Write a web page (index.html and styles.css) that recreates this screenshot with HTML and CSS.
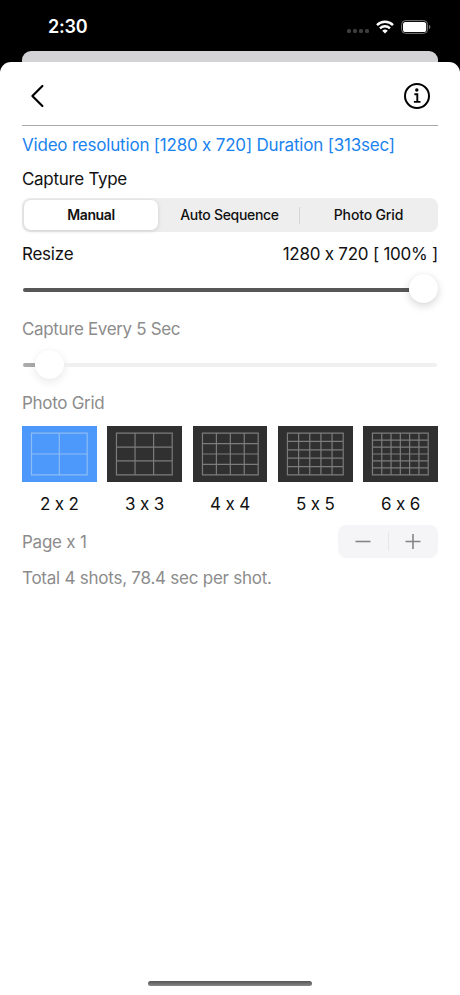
FILE: index.html
```html
<!DOCTYPE html>
<html lang="en">
<head>
<meta charset="utf-8">
<title>Capture settings</title>
<link rel="stylesheet" href="styles.css">
</head>
<body>
<div class="phone">
  <div class="status">
    <span class="time">2:30</span>
    <span class="dots"><i></i><i></i><i></i><i></i></span>
    <svg class="wifi" width="18" height="14" viewBox="0 0 18 14"><g fill="none" stroke="#fff" stroke-width="2.4"><path d="M1 5.1a11.4 11.4 0 0 1 16 0"/><path d="M4 8.3a7.2 7.2 0 0 1 10 0"/></g><path d="M9 13.6L6.2 10.8a4 4 0 0 1 5.6 0z" fill="#fff"/></svg>
    <svg class="battery" width="30" height="14" viewBox="0 0 30 14"><rect x=".6" y=".6" width="26" height="12.8" rx="4" fill="none" stroke="#777" stroke-width="1"/><rect x="2" y="2" width="23.2" height="10" rx="2.6" fill="#fff"/><path d="M28 5v4q1.400-.6 1.400-2t-1.400-2z" fill="#777"/></svg>
  </div>
  <div class="back-sheet"></div>
  <main class="sheet">
    <header class="header">
      <svg class="back" width="16" height="24" viewBox="0 0 16 24"><path d="M12.400 2L2.400 12l10 10" fill="none" stroke="#000" stroke-width="2.200" stroke-linecap="round" stroke-linejoin="round"/></svg>
      <svg class="info" width="28" height="28" viewBox="0 0 28 28"><circle cx="14" cy="14" r="12" fill="none" stroke="#000" stroke-width="2"/><circle cx="13.800" cy="8" r="1.700"/><path d="M11.400 12.200h2.900v7.500M10.900 19.900h6.600" fill="none" stroke="#000" stroke-width="1.900"/></svg>
    </header>
    <div class="row video"><span>Video resolution [1280 x 720] Duration [313sec]</span></div>
    <div class="row type"><span>Capture Type</span></div>
    <div class="segments">
      <div class="segment selected">Manual</div>
      <div class="segment middle">Auto Sequence</div>
      <div class="segment divided">Photo Grid</div>
    </div>
    <div class="row resize"><span>Resize</span><span>1280 x 720 [ 100% ]</span></div>
    <div class="slider full"><div class="fill"></div><div class="knob"></div></div>
    <div class="row every dim"><span>Capture Every 5 Sec</span></div>
    <div class="slider off"><div class="fill"></div><div class="knob"></div><div class="rest"></div></div>
    <div class="row grid-title dim"><span>Photo Grid</span></div>
    <div class="tiles">
      <div class="tile active"><svg viewBox="0 0 75 56"><path d="M9.500 7h56v42h-56zM37.500 7v42M9.500 28h56"/></svg><span>2 x 2</span></div>
      <div class="tile"><svg viewBox="0 0 75 56"><path d="M9.500 7h56v42h-56zM28.170 7v42M46.830 7v42M9.500 21h56M9.500 35h56"/></svg><span>3 x 3</span></div>
      <div class="tile"><svg viewBox="0 0 75 56"><path d="M9.500 7h56v42h-56zM23.500 7v42M37.500 7v42M51.500 7v42M9.500 17.500h56M9.500 28h56M9.500 38.500h56"/></svg><span>4 x 4</span></div>
      <div class="tile"><svg viewBox="0 0 75 56"><path d="M9.500 7h56v42h-56zM20.700 7v42M31.900 7v42M43.100 7v42M54.300 7v42M9.500 15.400h56M9.500 23.800h56M9.500 32.200h56M9.500 40.600h56"/></svg><span>5 x 5</span></div>
      <div class="tile"><svg viewBox="0 0 75 56"><path d="M9.500 7h56v42h-56zM18.830 7v42M28.170 7v42M37.500 7v42M46.830 7v42M56.170 7v42M9.500 14h56M9.500 21h56M9.500 28h56M9.500 35h56M9.500 42h56"/></svg><span>6 x 6</span></div>
    </div>
    <div class="row page dim"><span>Page x 1</span>
      <div class="stepper">
        <svg width="50" height="33" viewBox="0 0 50 33"><path d="M17.500 16.500h15"/></svg>
        <div class="split"></div>
        <svg width="50" height="33" viewBox="0 0 50 33"><path d="M17.500 16.500h15M25 9v15"/></svg>
      </div>
    </div>
    <div class="row total dim"><span>Total 4 shots, 78.4 sec per shot.</span></div>
    <div class="home"></div>
  </main>
</div>
</body>
</html>
```
FILE: styles.css
```css
* { box-sizing: border-box; }
body { margin: 0; background: #000; font-family: Inter, "Liberation Sans", sans-serif; font-size: 17px; font-feature-settings: "calt" 0; color: #111; }
svg { display: block; flex: none; }
.phone { width: 460px; height: 995px; display: flex; flex-direction: column; overflow: hidden; }
.status { height: 51px; display: flex; align-items: center; padding: 2px 29px 0 48px; color: #fff; }
.time { font-size: 18px; font-weight: 600; letter-spacing: -0.2px; }
.dots { display: flex; gap: 2px; margin: 9px 7px 0 auto; }
.dots i { width: 4px; height: 4px; border-radius: 1.5px; background: #3d3d3d; }
.battery { margin-left: 7px; }
.back-sheet { height: 10.5px; margin: 0 22px; background: #d3d3d6; border-radius: 9px 9px 0 0; flex: none; }
.sheet { flex: 1; display: flex; flex-direction: column; background: #fff; border-radius: 11px 11px 0 0; padding: 0 22px; }
.header { height: 64px; border-bottom: 1px solid #aaa; display: flex; align-items: center; justify-content: space-between; padding: 6px 7px 0 8px; }
.row { display: flex; align-items: center; justify-content: space-between; white-space: nowrap; letter-spacing: -0.24px; }
.dim { color: #8c8c8c; }
.video { height: 39px; color: #1a83ee; letter-spacing: -0.2px; }
.type { height: 29px; letter-spacing: -0.3px; }
.segments { height: 34px; margin-top: 4px; display: flex; border-radius: 8px; background: #eee; padding: 2px 0 2px 2px; }
.segment { flex: 1; display: flex; align-items: center; justify-content: center; font-size: 14px; font-weight: 500; letter-spacing: -0.15px; position: relative; }
.selected { background: #fff; border-radius: 7px; box-shadow: 0 1px 4px rgba(0,0,0,.14); font-weight: 600; letter-spacing: -0.4px; flex: 0 0 134px; }
.middle { flex: 0 0 141px; padding-left: 2px; letter-spacing: -0.3px; }
.divided::before { content: ""; position: absolute; left: 0; top: 7px; width: 1px; height: 17px; background: #d5d5d5; }
.resize { height: 44px; padding-top: 1px; }
.slider { display: flex; align-items: center; flex: none; }
.slider .knob { width: 29px; height: 29px; flex: none; border-radius: 50%; background: #fff; box-shadow: 0 3px 9px rgba(0,0,0,.16), 0 0 2px rgba(0,0,0,.06); }
.slider .fill { height: 4px; margin-left: 1px; border-radius: 2px 0 0 2px; background: #575757; }
.full { height: 28px; }
.full .fill { flex: 1; margin-top: 1px; }
.full .knob { margin-top: -2px; }
.every { height: 50px; letter-spacing: -0.35px; }
.off { height: 22px; }
.off .fill { width: 12px; background: #aaa; }
.off .knob { box-shadow: 0 3px 10px rgba(0,0,0,.09), 0 0 2px rgba(0,0,0,.04); margin-top: -1px; }
.off .rest { flex: 1; height: 4px; background: #f0f0f0; border-radius: 0 2px 2px 0; margin-right: 1px; }
.grid-title { height: 50px; padding-top: 5px; letter-spacing: -0.3px; }
.tiles { display: grid; grid-template-columns: repeat(5, 1fr); gap: 10.7px; height: 99px; }
.tile { text-align: center; }
.tile svg { width: 100%; height: 56px; background: #303031; fill: none; stroke: #7c7c7c; stroke-width: 1.2; }
.tile.active svg { background: #4d99fb; stroke: #8dbcf5; }
.tile span { display: block; line-height: 44px; letter-spacing: -0.15px; }
.page { height: 33px; }
.page span { padding-top: 1px; }
.stepper { width: 100px; height: 33px; border-radius: 8px; background: #f5f5f7; display: flex; align-items: center; }
.stepper svg { stroke: #858587; stroke-width: 1.6; fill: none; }
.split { width: 1px; height: 19px; margin: 0 -0.5px; background: #e6e6e8; flex: none; }
.total { height: 40px; }
.home { width: 164px; height: 5px; border-radius: 3px; background: linear-gradient(#555, #888); margin: auto auto 9px; }
```
